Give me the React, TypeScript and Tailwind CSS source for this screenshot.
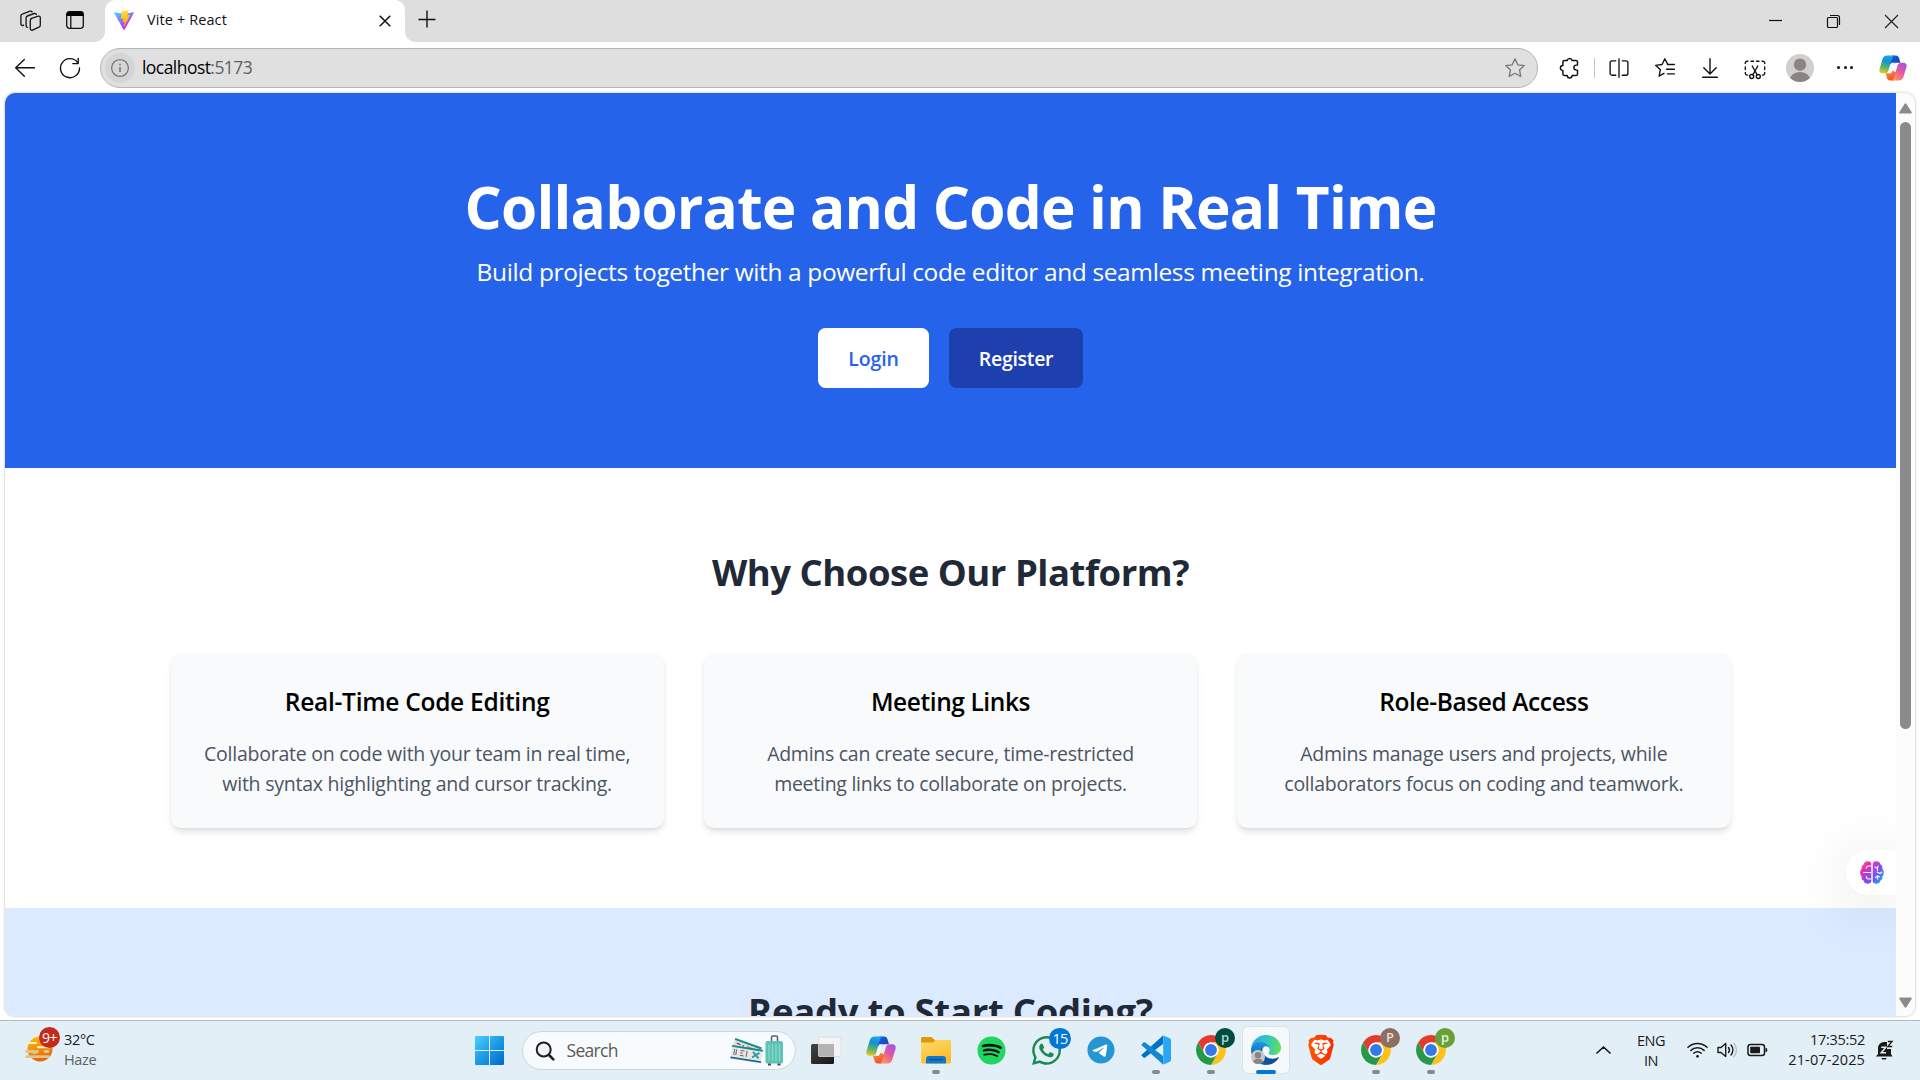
import type { ReactNode } from 'react';
import { FaSpotify, FaTelegram, FaWhatsapp } from 'react-icons/fa6';
import { SiBrave } from 'react-icons/si';

const UI = "font-['Open_Sans','Noto_Sans',sans-serif]";

/* ---------- Browser chrome icons ---------- */

function WorkspacesIcon() {
  return (
    <svg className="h-6 w-6" viewBox="0 0 24 24" fill="none" stroke="#1a1a1a" strokeWidth="1.35" strokeLinejoin="round" strokeLinecap="round">
      <path d="m11.700 9.600 7.600-2.400a1.500 1.500 0 0 1 2 1.400v7.600a2 2 0 0 1-1.300 1.900l-6.500 3a1.500 1.500 0 0 1-2.200-1.400v-8a2 2 0 0 1 1.400-2" />
      <path d="M8.500 18.300a1.600 1.600 0 0 1-1.400-1.700V8.900a2 2 0 0 1 1.300-1.900l6.800-2.500a1.700 1.700 0 0 1 2.200 1" />
      <path d="M4.500 16.100a1.600 1.600 0 0 1-2.600-1.200V7.100a2 2 0 0 1 1.300-1.900l7.900-3a1.700 1.700 0 0 1 2 .7" />
    </svg>
  );
}

function TabActionsIcon() {
  return (
    <svg className="h-5 w-5" viewBox="0 0 20 20" fill="none">
      <rect x="1.700" y="1.700" width="16.600" height="16.600" rx="2.800" stroke="#111" strokeWidth="1.300" />
      <path d="M1.500 6V4A2.600 2.600 0 0 1 4 1.400h12A2.600 2.600 0 0 1 18.500 4v2Z" fill="#000" />
      <path d="M5.800 6v12" stroke="#111" strokeWidth="1.300" />
    </svg>
  );
}

function ViteLogo() {
  return (
    <svg className="h-5 w-5" viewBox="0 0 256 257">
      <defs>
        <linearGradient id="vite-a" x1="0" x2=".58" y1=".08" y2=".79">
          <stop offset="0" stopColor="#41D1FF" />
          <stop offset="1" stopColor="#BD34FE" />
        </linearGradient>
        <linearGradient id="vite-b" x1=".43" x2=".5" y1=".02" y2=".89">
          <stop offset="0" stopColor="#FFEA83" />
          <stop offset=".08" stopColor="#FFDD35" />
          <stop offset="1" stopColor="#FFA800" />
        </linearGradient>
      </defs>
      <path fill="url(#vite-a)" d="M255.153 37.938 134.897 252.976c-2.483 4.440-8.862 4.466-11.382.048L.875 37.958c-2.746-4.814 1.371-10.646 6.827-9.670l120.385 21.517a6.537 6.537 0 0 0 2.322-.004l117.867-21.483c5.438-.991 9.574 4.796 6.877 9.620Z" />
      <path fill="url(#vite-b)" d="M185.432.063 96.440 17.501a3.268 3.268 0 0 0-2.634 3.014l-5.474 92.456a3.268 3.268 0 0 0 3.997 3.378l24.777-5.718c2.318-.535 4.413 1.507 3.936 3.838l-7.361 36.047c-.495 2.426 1.782 4.500 4.151 3.780l15.304-4.649c2.372-.720 4.652 1.360 4.150 3.788l-11.698 56.621c-.732 3.542 3.979 5.473 5.943 2.437l1.313-2.028 72.516-144.720c1.215-2.423-.880-5.186-3.540-4.672l-25.505 4.922c-2.396.462-4.435-1.770-3.759-4.114l16.646-57.705c.677-2.350-1.370-4.583-3.769-4.113Z" />
    </svg>
  );
}

function BackIcon() {
  return (
    <svg className="h-5 w-5" viewBox="0 0 20 20" fill="none" stroke="#111" strokeWidth="1.400" strokeLinecap="round" strokeLinejoin="round">
      <path d="M19.500 9.800H.800M9.300 1.500.700 9.800l8.600 8.500" />
    </svg>
  );
}

function ReloadIcon() {
  return (
    <svg className="h-[22px] w-[22px]" viewBox="0 0 22 22" fill="none" stroke="#111" strokeWidth="1.400" strokeLinecap="round" strokeLinejoin="round">
      <path d="M20.500 11A9.500 9.500 0 1 1 18.400 5.200" />
      <path d="M19.200 1.400v5.200h-5.400" />
    </svg>
  );
}

function InfoIcon() {
  return (
    <svg className="h-5 w-5" viewBox="0 0 20 20" fill="none" stroke="#777" strokeWidth="1.300">
      <circle cx="10" cy="10" r="8.400" />
      <path d="M10 9v5M10 5.800v1.400" strokeWidth="1.600" />
    </svg>
  );
}

function StarIcon() {
  return (
    <svg className="h-[22px] w-[22px]" viewBox="0 0 22 22" fill="none" stroke="#777" strokeWidth="1.300" strokeLinejoin="round">
      <path d="m11 1.900 2.800 5.900 6.500.8-4.800 4.400 1.300 6.500-5.800-3.200-5.800 3.200 1.300-6.500-4.800-4.400 6.500-.8Z" />
    </svg>
  );
}

function ExtensionIcon() {
  return (
    <svg className="h-[22px] w-[22px]" viewBox="0 0 22 22" fill="none" stroke="#111" strokeWidth="1.450" strokeLinejoin="round">
      <path d="M8.200 3.500a2.500 2.500 0 0 1 4.900 0h3.800a1.600 1.600 0 0 1 1.600 1.600v3h-1.100a2.500 2.500 0 0 0 0 5h1.100v3.800a1.600 1.600 0 0 1-1.600 1.600h-3.800v.5a2.500 2.500 0 0 1-4.900 0v-.5H5.500a1.600 1.600 0 0 1-1.600-1.600v-3.500a2.500 2.500 0 0 1 0-5V5.100a1.600 1.600 0 0 1 1.600-1.600Z" />
    </svg>
  );
}

function SplitIcon() {
  return (
    <svg className="h-5 w-5" viewBox="0 0 20 20" fill="none" stroke="#111" strokeWidth="1.350" strokeLinecap="round">
      <path d="M10 .8v18.400" />
      <path d="M6.800 2.800H3A1.900 1.900 0 0 0 1.100 4.700v10.600A1.900 1.900 0 0 0 3 17.200h3.800M13.200 2.800H17a1.900 1.900 0 0 1 1.900 1.900v10.600a1.900 1.900 0 0 1-1.900 1.900h-3.800" />
    </svg>
  );
}

function FavoritesIcon() {
  return (
    <svg className="h-[22px] w-[22px]" viewBox="0 0 22 22" fill="none" stroke="#111" strokeWidth="1.350" strokeLinejoin="round" strokeLinecap="round">
      <path d="M13.500 6.900 10.800 1.800 8.100 7.500l-6.500.8 4.800 4.400-1.300 6.500 4.900-2.800M13.500 7.500h6.900M12.500 12.200h7.900M13.500 16.900h6.900" />
    </svg>
  );
}

function DownloadIcon() {
  return (
    <svg className="h-5 w-5" viewBox="0 0 20 20" fill="none" stroke="#111" strokeWidth="1.400" strokeLinecap="round" strokeLinejoin="round">
      <path d="M10 .7v15M3.800 9.700l6.200 6.200 6.200-6.200M2.700 19.300h14.600" />
    </svg>
  );
}

function ScreenshotIcon() {
  return (
    <svg className="h-[22px] w-[22px]" viewBox="0 0 22 22" fill="none" stroke="#111" strokeWidth="1.350" strokeLinecap="round">
      <path d="M1.300 4.500V4A1.800 1.800 0 0 1 3.100 2.200h.8M7 2.200h2.500M12.500 2.200H15M18 2.200h.8A1.800 1.800 0 0 1 20.700 4v.5M1.300 8v2.500M20.700 8v2.500M1.300 13.500v.8a1.800 1.800 0 0 0 1.800 1.800h.6M20.700 13.500v.8a1.800 1.800 0 0 1-1.800 1.800h-.6" />
      <path d="m8.200 7 5 8.800M13.800 7l-5 8.800" />
      <circle cx="7.700" cy="17.500" r="2" />
      <circle cx="14.300" cy="17.500" r="2" />
    </svg>
  );
}

function Avatar() {
  return (
    <svg className="h-7 w-7" viewBox="0 0 28 28">
      <defs>
        <clipPath id="avatar-clip"><circle cx="14" cy="14" r="14" /></clipPath>
      </defs>
      <g clipPath="url(#avatar-clip)">
        <rect width="28" height="28" fill="#d2d0ce" />
        <circle cx="14" cy="10.700" r="6.200" fill="#8a8583" />
        <ellipse cx="14" cy="25.500" rx="10" ry="7.500" fill="#8a8583" />
      </g>
    </svg>
  );
}

function CopilotIcon({ id, className }: { id: string; className: string }) {
  return (
    <svg className={className} viewBox="0 0 30 28">
      <defs>
        <linearGradient id={id + '-l'} x1=".4" y1="0" x2=".2" y2="1">
          <stop offset="0" stopColor="#1aa3f0" />
          <stop offset=".3" stopColor="#178fd0" />
          <stop offset=".62" stopColor="#52b471" />
          <stop offset="1" stopColor="#f5c518" />
        </linearGradient>
        <linearGradient id={id + '-r'} x1=".8" y1="0" x2=".2" y2="1">
          <stop offset="0" stopColor="#a353e8" />
          <stop offset=".45" stopColor="#e557a0" />
          <stop offset="1" stopColor="#ff9a5a" />
        </linearGradient>
        <linearGradient id={id + '-t'} x1="0" y1="0" x2="1" y2="1">
          <stop offset="0" stopColor="#1b62d8" />
          <stop offset="1" stopColor="#1440b4" />
        </linearGradient>
        <linearGradient id={id + '-b'} x1="0" y1="0" x2=".6" y2="1">
          <stop offset="0" stopColor="#f8a12c" />
          <stop offset="1" stopColor="#ee4a35" />
        </linearGradient>
      </defs>
      <path d="M14 .5h4.200c1.800 0 2.800 1 3.300 2.700L23 8.300h-3.500c-2.200 0-3.300.9-4 3L11 9Z" fill={`url(#${id}-t)`} />
      <path d="M16 27.500h-4.200c-1.800 0-2.800-1-3.300-2.700L7 19.700h3.500c2.200 0 3.300-.9 4-3L19 19Z" fill={`url(#${id}-b)`} />
      <path d="M13.300 8.300h6.200c-2.200 0-3.300.9-4 3l-2.600 8.400H9.400c1.200-.4 1.600-1.300 2-2.700Z" fill="#f7fafd" />
      <path d="M8.700.5h8.200c-1.800.4-2.500 1.800-3.100 3.800l-3.700 12.400c-.7 2.200-1.900 3-3.900 3H3.700C.8 19.700-.2 17.400.5 15L3.700 4.500C4.600 1.800 6 .5 8.700.5Z" fill={`url(#${id}-l)`} />
      <path d="M21.300 27.500h-8.200c1.800-.4 2.500-1.800 3.100-3.800l3.700-12.400c.7-2.200 1.900-3 3.900-3h2.500c2.900 0 3.900 2.300 3.200 4.700l-3.200 10.500c-.9 2.700-2.300 4-5 4Z" fill={`url(#${id}-r)`} />
    </svg>
  );
}

/* ---------- Taskbar icons ---------- */

function WeatherIcon() {
  return (
    <svg className="h-7 w-7" viewBox="0 0 28 28">
      <defs>
        <linearGradient id="sun" x1="0" y1="0" x2=".3" y2="1">
          <stop offset="0" stopColor="#fdc20a" />
          <stop offset="1" stopColor="#e8640c" />
        </linearGradient>
      </defs>
      <circle cx="15" cy="14" r="12.500" fill="url(#sun)" />
      <path d="M4 8h7M13 12.200h12M8 17.500h3" stroke="#fff1c4" strokeWidth="2" strokeLinecap="round" />
      <path d="M1.500 16.500h11M20 16.500h3M1.500 21.700h22" stroke="#dcc58f" strokeWidth="2.800" strokeLinecap="round" />
    </svg>
  );
}

function WindowsIcon() {
  return (
    <svg className="h-[29px] w-[29px]" viewBox="0 0 29 29">
      <defs>
        <linearGradient id="win" x1="0" y1="0" x2="29" y2="29" gradientUnits="userSpaceOnUse">
          <stop offset="0" stopColor="#4fd0ff" />
          <stop offset=".5" stopColor="#1a9be6" />
          <stop offset="1" stopColor="#0067cc" />
        </linearGradient>
      </defs>
      <path fill="url(#win)" d="M1 0h13v14H0V1a1 1 0 0 1 1-1ZM15 0h13a1 1 0 0 1 1 1v13H15ZM0 15h14v14H1a1 1 0 0 1-1-1ZM15 15h14v13a1 1 0 0 1-1 1H15Z" />
    </svg>
  );
}

function SearchIcon() {
  return (
    <svg className="h-5 w-5" viewBox="0 0 20 20" fill="none" stroke="#1f1f1f" strokeLinecap="round">
      <circle cx="8.700" cy="8.500" r="7" strokeWidth="2" fill="#f2f2f2" />
      <path d="m14 14 4.300 4.300" strokeWidth="2.600" />
    </svg>
  );
}

function TravelArt() {
  return (
    <svg className="h-[31px] w-[54px]" viewBox="0 0 54 31">
      <g transform="rotate(20 4 4)">
        <rect x="5" y="2.500" width="28" height="9" fill="#e4ded6" />
        <rect x="5" y="2.500" width="28" height="2" fill="#128c92" />
        <path d="M8 7h4M15 6.500v3M19 7h5" stroke="#555a75" strokeWidth="1.300" />
      </g>
      <g transform="rotate(9 2 12)">
        <rect x="2" y="10" width="31" height="13" fill="#ece6de" />
        <rect x="2" y="10" width="31" height="1.800" fill="#0f8b8d" />
        <rect x="2" y="21.500" width="31" height="1.800" fill="#1b68a0" />
        <path d="M5 13.500v6M7 13.500v6M11 14h4M11 16.500h2.500M11 19h4M17.500 13.500v6" stroke="#62657f" strokeWidth="1" />
        <path d="m23.500 13.500 6.500 5.500m0-5.500L23.500 19" stroke="#2a9bb0" strokeWidth="2" />
      </g>
      <path d="M41.500 7V2.500A1.500 1.500 0 0 1 43 1h3a1.500 1.500 0 0 1 1.500 1.500V7" fill="none" stroke="#575a7c" strokeWidth="1.500" />
      <rect x="35.500" y="6" width="17.500" height="22.500" rx="2" fill="#5cc4b4" />
      <path d="M39 9v17M42.500 9v17M46 9v17M49.500 9v17" stroke="#84d8ca" strokeWidth="1.300" />
      <path d="M38 29.500h3M47.500 29.500h3" stroke="#474a66" strokeWidth="1.800" />
    </svg>
  );
}

function TaskViewIcon() {
  return (
    <svg className="h-[29px] w-[31px]" viewBox="0 0 31 29">
      <defs>
        <linearGradient id="tv" x1="0" y1="0" x2="1" y2="1">
          <stop offset="0" stopColor="#464646" />
          <stop offset="1" stopColor="#151515" />
        </linearGradient>
      </defs>
      <rect x="0" y="8" width="23" height="20" rx="1.500" fill="url(#tv)" />
      <rect x="7.500" y="1" width="22.500" height="19.500" rx="1" fill="#f3f4f5" stroke="#d5d8da" strokeWidth=".7" />
      <path d="M8 8h15v12H8Z" fill="#b3b3b3" />
    </svg>
  );
}

function FolderIcon() {
  return (
    <svg className="h-[28px] w-[30px]" viewBox="0 0 30 28">
      <defs>
        <linearGradient id="fold" x1="0" y1="0" x2=".5" y2="1">
          <stop offset="0" stopColor="#ffdb67" />
          <stop offset="1" stopColor="#fbbd2e" />
        </linearGradient>
      </defs>
      <path d="M1.500 1h9l4 3.500V9H0V2.500A1.500 1.500 0 0 1 1.500 1Z" fill="#dd9b0c" />
      <path d="M0 6.500h12L15 4h13.500A1.500 1.500 0 0 1 30 5.500V26a1.500 1.500 0 0 1-1.500 1.500h-27A1.500 1.500 0 0 1 0 26Z" fill="url(#fold)" />
      <path d="M5 27.500V23a3 3 0 0 1 3-3h14a3 3 0 0 1 3 3v4.500Z" fill="#1377c9" />
      <path d="M9 23.700h12" stroke="#0b4f95" strokeWidth="1.300" strokeLinecap="round" />
    </svg>
  );
}

function VsCodeIcon() {
  return (
    <svg className="h-[30px] w-[30px]" viewBox="0 0 30 30">
      <path d="M22 .4 3.200 17.600 1 19.300a1.200 1.200 0 0 0 0 1.800l1.500 1.300a1.400 1.400 0 0 0 1.700.1L22 9Z" fill="#0074c4" />
      <path d="M22 29.600 3.200 12.400 1 10.700a1.200 1.200 0 0 1 0-1.800l1.500-1.300a1.400 1.400 0 0 1 1.700-.1L22 21Z" fill="#1287d6" />
      <path d="M22 .300 28.700 3.300A2.200 2.200 0 0 1 30 5.300v19.400a2.200 2.200 0 0 1-1.300 2L22 29.700c.1-.1.200-.7.200-1.500V1.800Z" fill="#2aa7f4" />
    </svg>
  );
}

function ChromeIcon() {
  return (
    <svg className="h-[30px] w-[30px]" viewBox="0 0 48 48">
      <circle cx="24" cy="24" r="24" fill="#fff" />
      <path d="M3.220 12A24 24 0 0 1 44.780 12H24a12 12 0 0 0-10.390 18Z" fill="#e33b2e" />
      <path d="M44.780 12A24 24 0 0 1 24 48l10.390-18A12 12 0 0 0 24 12Z" fill="#fcc31e" />
      <path d="M24 48A24 24 0 0 1 3.220 12l10.390 18a12 12 0 0 0 20.780 0Z" fill="#279847" />
      <circle cx="24" cy="24" r="12" fill="#fff" />
      <circle cx="24" cy="24" r="9.500" fill="#3478ea" />
    </svg>
  );
}

function EdgeIcon() {
  return (
    <svg className="h-[30px] w-[30px]" viewBox="0 0 256 256">
      <defs>
        <linearGradient id="edge-a" x1="0" y1=".5" x2="1" y2=".5">
          <stop offset="0" stopColor="#0c59a4" />
          <stop offset="1" stopColor="#114a8b" />
        </linearGradient>
        <linearGradient id="edge-b" x1=".6" y1="0" x2=".4" y2="1">
          <stop offset="0" stopColor="#1b9de2" />
          <stop offset="1" stopColor="#0a5ba8" />
        </linearGradient>
        <linearGradient id="edge-c" x1="0" y1=".5" x2="1" y2=".6">
          <stop offset="0" stopColor="#35a5e5" />
          <stop offset=".5" stopColor="#33c5c9" />
          <stop offset="1" stopColor="#62e04f" />
        </linearGradient>
      </defs>
      <path fill="url(#edge-a)" d="M231 190.500c-3.400 1.800-6.900 3.400-10.500 4.700a101.800 101.800 0 0 1-35.900 6.500c-47.300 0-88.500-32.500-88.500-74.300a31.500 31.500 0 0 1 16.400-27.300c-42.800 1.800-53.800 46.400-53.800 72.500 0 74 68.100 81.400 82.800 81.400 7.900 0 19.800-2.300 27-4.600l1.300-.4a128.300 128.300 0 0 0 66.600-52.800 4 4 0 0 0-5.400-5.700Z" />
      <path fill="url(#edge-b)" d="M105.700 241.400a79.200 79.200 0 0 1-22.700-21.300 80.700 80.700 0 0 1 29.500-120c3.200-1.500 8.500-4.100 15.600-4a32.400 32.400 0 0 1 25.700 13 31.900 31.900 0 0 1 6.300 18.700c0-.2 24.500-79.600-80-79.600-43.900 0-80 41.600-80 78.200a130.200 130.200 0 0 0 12.100 56 128 128 0 0 0 156.400 67 75.500 75.500 0 0 1-62.900-8Z" />
      <path fill="url(#edge-c)" d="M152.300 148.900c-.9 1-3.400 2.500-3.400 5.600 0 2.600 1.700 5.200 4.800 7.300 14.300 10 41.400 8.600 41.500 8.600 10.700 0 21.100-2.900 30.300-8.300a61.400 61.400 0 0 0 30.400-52.900c.3-22.400-8-37.300-11.300-43.900C223.500 23.900 177.700 0 128 0A128 128 0 0 0 0 126.200c.5-36.500 36.800-66 80-66 3.500 0 23.500.3 42 10.100 16.300 8.600 24.900 18.900 30.800 29.200 6.200 10.700 7.300 24.100 7.300 29.500 0 5.300-2.700 13.300-7.800 19.900Z" />
    </svg>
  );
}

function BrainIcon() {
  return (
    <svg className="h-[23px] w-6" viewBox="0 0 24 23">
      <defs>
        <linearGradient id="brain-l" x1=".1" y1="0" x2=".7" y2="1">
          <stop offset="0" stopColor="#ff9a1c" />
          <stop offset=".35" stopColor="#e62bb8" />
          <stop offset="1" stopColor="#6d55f5" />
        </linearGradient>
        <linearGradient id="brain-r" x1=".1" y1="0" x2=".8" y2="1">
          <stop offset="0" stopColor="#e038c8" />
          <stop offset=".5" stopColor="#7654f6" />
          <stop offset="1" stopColor="#12b0f5" />
        </linearGradient>
      </defs>
      <path fill="url(#brain-l)" d="M11.300 2.800C10.800 1 9.300.3 7.700.300 5.500.3 4 1.500 3.700 3.300 2 4 1.300 5.600 1.700 7.400.6 8.600.2 10 .2 11.500s.4 2.900 1.500 4.100c-.4 1.800.3 3.400 2 4.100.3 1.800 1.800 3 4 3 1.600 0 3.100-.7 3.600-2.500Z" />
      <path fill="url(#brain-r)" d="M12.700 2.800c.5-1.800 2-2.500 3.600-2.500 2.200 0 3.700 1.200 4 3 1.700.7 2.400 2.300 2 4.100 1.100 1.200 1.500 2.600 1.500 4.100s-.4 2.900-1.500 4.100c.4 1.800-.3 3.400-2 4.100-.3 1.800-1.800 3-4 3-1.600 0-3.100-.7-3.600-2.500Z" />
      <path d="M11 5H8.500C7 5 6.300 6 6.300 7.200M11 11.500H3.500M6.300 15.500c0 1.500 1 2.500 2.500 2.500H11M15 6l2.500 1.500L18 5M17.500 7.500v2M17 11l3 1.500 2-1.500M15.500 16.500l2-1.500 2 1M17.500 15v3" fill="none" stroke="#fff" strokeWidth="1.100" strokeLinecap="round" />
    </svg>
  );
}

/* ---------- Browser chrome ---------- */

function TabStrip() {
  return (
    <div className="flex h-[42px] shrink-0 bg-[#dedede]">
      <div className="flex w-[105px] items-center pl-[19px]">
        <WorkspacesIcon />
        <div className="w-[22px]" />
        <div className="-mt-0.5"><TabActionsIcon /></div>
      </div>
      <div className="relative flex w-[300px] items-center rounded-t-[10px] bg-white pl-[9px] pr-[14px]">
        <div className="absolute bottom-0 -left-2.5 size-2.5 bg-[radial-gradient(circle_at_0_0,#dedede_9.500px,#fff_10px)]" />
        <div className="absolute bottom-0 -right-2.5 size-2.5 bg-[radial-gradient(circle_at_100%_0,#dedede_9.500px,#fff_10px)]" />
        <div className="-mt-0.5"><ViteLogo /></div>
        <span className="-mt-0.5 ml-[13px] flex-1 text-[14.500px] leading-5 tracking-[0.100px] text-[#111]">Vite + React</span>
        <svg className="h-3 w-3" viewBox="0 0 12 12" stroke="#111" strokeWidth="1.500"><path d="m.7.700 10.600 10.600M11.300.700.700 11.300" /></svg>
      </div>
      <svg className="ml-[13px] mt-[10px] h-[18px] w-[18px]" viewBox="0 0 18 18" stroke="#111" strokeWidth="1.400"><path d="M9 .5v17M.5 9.500h17" /></svg>
      <div className="flex-1" />
      <div className="flex items-start pr-[21px] pt-[14px]">
        <svg className="h-[15px] w-[15px]" viewBox="0 0 15 15" stroke="#111" strokeWidth="1.200"><path d="M1 6.500h13" /></svg>
        <svg className="ml-[43px] h-[15px] w-[15px]" viewBox="0 0 15 15" fill="none" stroke="#111" strokeWidth="1.200">
          <rect x="1.500" y="3.500" width="10" height="10" rx="1" />
          <path d="M4 1.500h7.500a2 2 0 0 1 2 2V11" />
        </svg>
        <svg className="ml-[43px] h-[15px] w-[15px]" viewBox="0 0 15 15" stroke="#222" strokeWidth="1.200"><path d="m1 1 13 13M14 1 1 14" /></svg>
      </div>
    </div>
  );
}

function Toolbar() {
  return (
    <div className="flex h-[51px] shrink-0 items-center bg-white pl-[15px] pr-[13px]">
      <BackIcon />
      <div className="ml-6"><ReloadIcon /></div>
      <div className="ml-[19px] flex h-10 w-[1438px] items-center rounded-full border border-[#b4b4b4] bg-[#e0e0e0] pl-1 pr-[11px]">
        <div className="flex size-[30px] items-center justify-center rounded-full bg-[#d5d5d5]"><InfoIcon /></div>
        <span className="-mt-0.5 ml-[7px] flex-1 text-[17.500px] leading-6 tracking-[-0.550px] text-black">
          localhost<span className="text-[#5f5f5f]">:5173</span>
        </span>
        <StarIcon />
      </div>
      <div className="ml-[21px]"><ExtensionIcon /></div>
      <div className="ml-[13px] h-5 w-px bg-[#c4c4c4]" />
      <div className="ml-[14px]"><SplitIcon /></div>
      <div className="ml-[25px]"><FavoritesIcon /></div>
      <div className="ml-[24px]"><DownloadIcon /></div>
      <div className="ml-[24px] mt-1"><ScreenshotIcon /></div>
      <div className="ml-[20px]"><Avatar /></div>
      <div className="ml-[23px] flex w-4 justify-between">
        <span className="size-[3px] rounded-full bg-[#111]" />
        <span className="size-[3px] rounded-full bg-[#111]" />
        <span className="size-[3px] rounded-full bg-[#111]" />
      </div>
      <div className="flex-1" />
      <CopilotIcon id="cp-bar" className="h-[26px] w-7" />
    </div>
  );
}

function ScrollBar() {
  return (
    <div className="flex w-[18px] flex-col items-center bg-[#fcfcfc] pb-[8px] pt-[10px]">
      <svg className="h-[11px] w-[13px]" viewBox="0 0 13 11" fill="#8b8b8b"><path d="M5.500.900a1.200 1.200 0 0 1 2 0l5.100 8a1 1 0 0 1-.8 1.600H1.200a1 1 0 0 1-.8-1.600Z" /></svg>
      <div className="mt-[8px] h-[607px] w-[11px] rounded-full bg-[#8b8b8b]" />
      <div className="flex-1" />
      <svg className="h-[11px] w-[13px]" viewBox="0 0 13 11" fill="#8b8b8b"><path d="M5.500 10.100a1.200 1.200 0 0 0 2 0l5.100-8A1 1 0 0 0 11.800.500H1.200a1 1 0 0 0-.8 1.600Z" /></svg>
    </div>
  );
}

/* ---------- Landing page ---------- */

const features = [
  { title: 'Real-Time Code Editing', titleTracking: 'tracking-[-0.280px]', textTracking: 'tracking-[-0.240px]', lines: ['Collaborate on code with your team in real time,', 'with syntax highlighting and cursor tracking.'] },
  { title: 'Meeting Links', titleTracking: 'tracking-[-0.420px]', textTracking: 'tracking-[-0.270px]', lines: ['Admins can create secure, time-restricted', 'meeting links to collaborate on projects.'] },
  { title: 'Role-Based Access', titleTracking: 'tracking-[-0.400px]', textTracking: 'tracking-[-0.260px]', lines: ['Admins manage users and projects, while', 'collaborators focus on coding and teamwork.'] },
];

function Hero() {
  return (
    <section className="flex h-[375px] shrink-0 flex-col items-center bg-[#2563eb] pt-20 text-white">
      <h1 className="h-[60px] whitespace-nowrap pt-[3px] text-[58.500px] font-bold leading-[60px] tracking-[-0.790px]">Collaborate and Code in Real Time</h1>
      <p className="mt-5 h-[35px] whitespace-nowrap pt-px text-[24.500px] leading-[35px] tracking-[-0.380px]">
        Build projects together with a powerful code editor and seamless meeting integration.
      </p>
      <div className="mt-10 flex gap-5">
        <button className="h-[60px] w-[111px] rounded-[7.500px] bg-white pt-px text-[19.500px] font-semibold leading-[30px] tracking-[-0.100px] text-[#2563eb]">Login</button>
        <button className="h-[60px] w-[134px] rounded-[7.500px] bg-[#1e40af] pt-px text-[19.500px] font-semibold leading-[30px] tracking-[-0.300px]">Register</button>
      </div>
    </section>
  );
}

function Features() {
  return (
    <section className="flex h-[440px] shrink-0 flex-col items-center bg-white pt-20">
      <h2 className="h-[45px] whitespace-nowrap pt-0.5 text-[36.500px] font-bold leading-[45px] tracking-[-0.480px] text-[#1f2937]">Why Choose Our Platform?</h2>
      <div className="mt-[60px] grid w-[1560px] grid-cols-3 gap-10">
        {features.map((f) => (
          <article key={f.title} className="h-[175px] rounded-[10px] bg-[#f9fafb] pt-[30px] text-center shadow-[0_5px_7px_-1px_rgba(0,0,0,0.100),0_2px_4px_-2px_rgba(0,0,0,0.100)]">
            <h3 className={`pt-0.5 text-[24.500px] font-semibold leading-[34px] text-black ${f.titleTracking}`}>{f.title}</h3>
            <p className={`mt-5 text-[19.500px] leading-[30px] text-[#4b5563] ${f.textTracking}`}>
              {f.lines[0]}
              <br />
              {f.lines[1]}
            </p>
          </article>
        ))}
      </div>
    </section>
  );
}

function CallToAction() {
  return (
    <section className="flex flex-1 flex-col items-center overflow-hidden bg-[#dbeafe] pt-20">
      <h2 className="h-7 overflow-hidden whitespace-nowrap px-1 pt-px text-[36.500px] font-bold leading-[45px] tracking-[-0.280px] text-[#1f2937]">Ready to Start Coding?</h2>
    </section>
  );
}

function AssistantTab() {
  return (
    <div className="absolute right-0 top-[757px] flex h-[45px] w-[50px] items-center rounded-l-full bg-white pl-[14px] shadow-[0_8px_60px_rgba(0,0,0,0.130)]">
      <BrainIcon />
    </div>
  );
}

/* ---------- Taskbar ---------- */

function TaskItem({ children, running, active, badge }: { children: ReactNode; running?: boolean; active?: boolean; badge?: ReactNode }) {
  return (
    <div className="flex w-[55px] justify-center">
      <div className={active ? 'relative flex h-12 w-12 items-center justify-center rounded-md border border-[#d9e2ea] bg-[#f5f9fc]' : 'relative flex h-12 w-12 items-center justify-center'}>
        {children}
        {badge}
        {running && <div className="absolute bottom-0 h-1 w-2 rounded-full bg-[#858a8e]" />}
        {active && <div className="absolute -bottom-px h-1 w-5 rounded-full bg-[#0078d4]" />}
      </div>
    </div>
  );
}

const badgeBase = 'absolute right-0 top-[2px] flex size-5 items-center justify-center rounded-full pb-0.5 text-[13px] font-semibold leading-5';

function Taskbar() {
  return (
    <footer className="flex h-[60px] shrink-0 items-start border-t border-[#b2bac1] bg-[#e3eff6]">
      <div className="flex w-[475px] pl-[25px] pt-[6px]">
        <div className="relative h-10 w-[39px] pt-2">
          <WeatherIcon />
          <span className="absolute left-[14px] top-0 flex size-[21px] items-center justify-center rounded-full bg-[#c42b1c] text-[14px] leading-5 tracking-[-0.500px] text-white">9+</span>
        </div>
        <div className="pt-[3px] text-[14.500px] leading-5 tracking-[-0.350px]">
          <p className="text-[#1c1c1c]">32°C</p>
          <p className="text-[#5c6266]">Haze</p>
        </div>
      </div>
      <div className="pt-[15px]"><WindowsIcon /></div>
      <div className="ml-[17.500px] mt-2.5 flex h-[39px] w-[274px] items-center rounded-full border border-[#cbd5dc] bg-[#f8fbfd] pl-3 pr-[11px]">
        <SearchIcon />
        <span className="-mt-0.5 ml-3 flex-1 text-[17.500px] leading-6 tracking-[-0.700px] text-[#5a5a5a]">Search</span>
        <TravelArt />
      </div>
      <div className="ml-[3px] flex pt-[5px]">
        <TaskItem><TaskViewIcon /></TaskItem>
        <TaskItem><CopilotIcon id="cp-task" className="h-[28px] w-[30px]" /></TaskItem>
        <TaskItem running><FolderIcon /></TaskItem>
        <TaskItem>
          <div className="flex size-[27px] items-center justify-center rounded-full bg-[#111]"><FaSpotify className="size-[29px] shrink-0 text-[#1ed760]" /></div>
        </TaskItem>
        <TaskItem badge={<span className="absolute -right-px top-[2px] flex h-[21px] w-[22px] items-center justify-center rounded-full bg-[#0078d4] text-[14.500px] leading-5 tracking-[-0.700px] text-white">15</span>}>
          <FaWhatsapp className="size-[33px] shrink-0 text-[#1c8a50]" />
        </TaskItem>
        <TaskItem>
          <div className="flex size-[25px] items-center justify-center rounded-full bg-white"><FaTelegram className="size-[28px] shrink-0 text-[#2496d3]" /></div>
        </TaskItem>
        <TaskItem running><VsCodeIcon /></TaskItem>
        <TaskItem running badge={<span className={`${badgeBase} bg-[#004d40] text-[#b9d4cd]`}>p</span>}><ChromeIcon /></TaskItem>
        <TaskItem active badge={<div className="absolute bottom-[9px] left-2 size-[14px] overflow-hidden rounded-full"><svg className="size-full" viewBox="0 0 28 28"><rect width="28" height="28" fill="#c9c9c9" /><circle cx="14" cy="10.500" r="6.500" fill="#858585" /><ellipse cx="14" cy="25" rx="10" ry="7.500" fill="#858585" /></svg></div>}>
          <EdgeIcon />
        </TaskItem>
        <TaskItem>
          <svg className="absolute size-0">
            <linearGradient id="brave" x1="0" y1="0" x2="1" y2="0">
              <stop offset="0" stopColor="#ff5601" />
              <stop offset="1" stopColor="#ff2a00" />
            </linearGradient>
          </svg>
          <div className="flex h-6 w-4 items-center justify-center bg-white"><SiBrave className="size-[30px] shrink-0" fill="url(#brave)" /></div>
        </TaskItem>
        <TaskItem running badge={<span className={`${badgeBase} bg-[#8d6e63] text-[#eadfd9]`}>P</span>}><ChromeIcon /></TaskItem>
        <TaskItem running badge={<span className={`${badgeBase} bg-[#689f38] text-[#e6f2da]`}>p</span>}><ChromeIcon /></TaskItem>
      </div>
      <div className="flex-1" />
      <svg className="mt-[25px] h-2 w-[15px]" viewBox="0 0 15 8" fill="none" stroke="#1a1a1a" strokeWidth="1.700" strokeLinecap="round" strokeLinejoin="round"><path d="m1 7 6.500-6L14 7" /></svg>
      <div className="ml-[21px] w-[38px] pt-[10px] text-center text-[14.500px] leading-5 tracking-[-0.500px] text-[#1c1c1c]">
        <p>ENG</p>
        <p>IN</p>
      </div>
      <div className="ml-[17px] flex items-center gap-[9px] pt-[18px]">
        <svg className="h-[22px] w-[21px]" viewBox="0 0 21 22" fill="none" stroke="#1a1a1a" strokeWidth="1.500" strokeLinecap="round">
          <path d="M1 8.300a13.500 13.500 0 0 1 19 0M3.900 11.400a9.400 9.400 0 0 1 13.200 0M6.800 14.300a5.300 5.300 0 0 1 7.400 0" />
          <circle cx="10.500" cy="17.300" r="1.400" fill="#1a1a1a" stroke="none" />
        </svg>
        <svg className="h-[20px] w-[21px]" viewBox="0 0 21 20" fill="none" stroke="#1a1a1a" strokeWidth="1.400" strokeLinecap="round" strokeLinejoin="round">
          <path d="M1 7.500h3l4.700-4v13l-4.700-4H1ZM11.500 7.500a4 4 0 0 1 0 5M14 5a7.500 7.500 0 0 1 0 10" />
          <path d="M17 3.500a10 10 0 0 1 0 13" stroke="#b8c0c6" />
        </svg>
        <svg className="h-[14px] w-[21px]" viewBox="0 0 21 14" fill="none">
          <rect x="1" y="1.500" width="16.500" height="11" rx="2.500" stroke="#1a1a1a" strokeWidth="1.500" />
          <rect x="3.200" y="3.700" width="9.800" height="6.600" rx=".8" fill="#1a1a1a" />
          <path d="M18.500 5h.8c.6 0 1 .7 1 2s-.4 2-1 2h-.8Z" fill="#1a1a1a" />
        </svg>
      </div>
      <div className="w-[97px] pt-[9px] text-right text-[14.500px] leading-5 text-[#1c1c1c]">
        <p className="tracking-[-0.300px]">17:35:52</p>
        <p className="tracking-[0.100px]">21-07-2025</p>
      </div>
      <svg className="ml-[10px] mr-[26px] mt-[18px] h-[22px] w-[19px]" viewBox="0 0 19 22">
        <path d="M3 15V9a6 6 0 0 1 6-6h3v7h4v5l1.500 2.500H1Z" fill="#1a1a1a" />
        <path d="M6.300 19h5.400l-1 1.500H7.300Z" fill="#1a1a1a" />
        <path d="M6.200 8.200h4.600l-4.600 5.600h4.800" fill="none" stroke="#e3eff6" strokeWidth="1.500" />
        <path d="M12.800 2.500h4.200l-4.200 5h4.400" fill="none" stroke="#1a1a1a" strokeWidth="1.300" />
      </svg>
    </footer>
  );
}

export default function App() {
  return (
    <div className={`flex h-[1080px] w-[1920px] flex-col overflow-hidden bg-white ${UI}`}>
      <TabStrip />
      <Toolbar />
      <div className="ml-[5px] flex h-[923px] w-[1910px] shrink-0 overflow-hidden rounded-[10px] shadow-[0_0_2px_1px_rgba(0,0,0,0.140)]">
        <main className="relative flex w-[1891px] flex-col overflow-hidden">
          <Hero />
          <Features />
          <CallToAction />
          <AssistantTab />
        </main>
        <ScrollBar />
      </div>
      <div className="h-1 shrink-0" />
      <Taskbar />
    </div>
  );
}
